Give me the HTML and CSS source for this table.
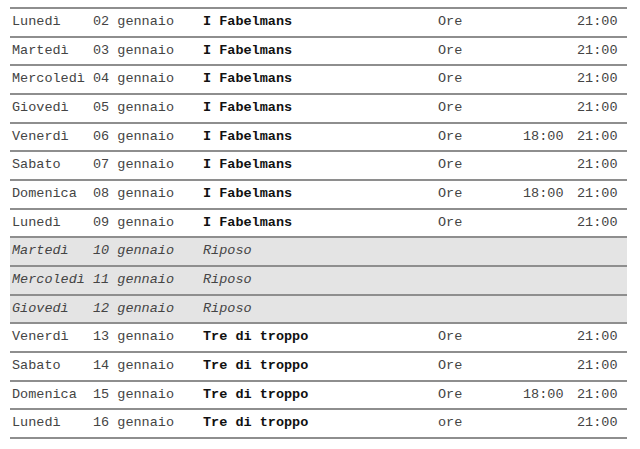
FILE: index.html
```html
<!DOCTYPE html>
<html lang="it">
<head>
<meta charset="utf-8">
<link rel="stylesheet" href="styles.css">
</head>
<body>
<div class="sched">
  <div class="row"><span>Lunedì</span><span>02 gennaio</span><span class="t">I Fabelmans</span><span>Ore</span><span class="h"></span><span class="h">21:00</span></div>
  <div class="row"><span>Martedì</span><span>03 gennaio</span><span class="t">I Fabelmans</span><span>Ore</span><span class="h"></span><span class="h">21:00</span></div>
  <div class="row"><span>Mercoledì</span><span>04 gennaio</span><span class="t">I Fabelmans</span><span>Ore</span><span class="h"></span><span class="h">21:00</span></div>
  <div class="row"><span>Giovedì</span><span>05 gennaio</span><span class="t">I Fabelmans</span><span>Ore</span><span class="h"></span><span class="h">21:00</span></div>
  <div class="row"><span>Venerdì</span><span>06 gennaio</span><span class="t">I Fabelmans</span><span>Ore</span><span class="h">18:00</span><span class="h">21:00</span></div>
  <div class="row"><span>Sabato</span><span>07 gennaio</span><span class="t">I Fabelmans</span><span>Ore</span><span class="h"></span><span class="h">21:00</span></div>
  <div class="row"><span>Domenica</span><span>08 gennaio</span><span class="t">I Fabelmans</span><span>Ore</span><span class="h">18:00</span><span class="h">21:00</span></div>
  <div class="row"><span>Lunedì</span><span>09 gennaio</span><span class="t">I Fabelmans</span><span>Ore</span><span class="h"></span><span class="h">21:00</span></div>
  <div class="row rest"><span>Martedì</span><span>10 gennaio</span><span>Riposo</span><span></span><span></span><span></span></div>
  <div class="row rest"><span>Mercoledì</span><span>11 gennaio</span><span>Riposo</span><span></span><span></span><span></span></div>
  <div class="row rest"><span>Giovedì</span><span>12 gennaio</span><span>Riposo</span><span></span><span></span><span></span></div>
  <div class="row"><span>Venerdì</span><span>13 gennaio</span><span class="t">Tre di troppo</span><span>Ore</span><span class="h"></span><span class="h">21:00</span></div>
  <div class="row"><span>Sabato</span><span>14 gennaio</span><span class="t">Tre di troppo</span><span>Ore</span><span class="h"></span><span class="h">21:00</span></div>
  <div class="row"><span>Domenica</span><span>15 gennaio</span><span class="t">Tre di troppo</span><span>Ore</span><span class="h">18:00</span><span class="h">21:00</span></div>
  <div class="row last"><span>Lunedì</span><span>16 gennaio</span><span class="t">Tre di troppo</span><span>ore</span><span class="h"></span><span class="h">21:00</span></div>
</div>
</body>
</html>
```
FILE: styles.css
```css
html, body {
  margin: 0;
  padding: 0;
  background: #ffffff;
}
.sched {
  margin: 7px 0 0 10px;
  width: 617px;
  font-family: "Liberation Mono", "Courier New", monospace;
  font-size: 13.5px;
  color: #444444;
}
.row {
  display: grid;
  grid-template-columns: 81px 110px 235px 85px 54px 41px;
  padding-left: 2px;
  height: 26.67px;
  line-height: 26.67px;
  border-top: 2px solid #8e8e8e;
  white-space: nowrap;
}
.row.last {
  border-bottom: 2px solid #8e8e8e;
}
.row .t {
  font-weight: bold;
  color: #111111;
}
.row .h {
  text-align: left;
}
.row.rest {
  background: #e4e4e4;
  font-style: italic;
}
```
